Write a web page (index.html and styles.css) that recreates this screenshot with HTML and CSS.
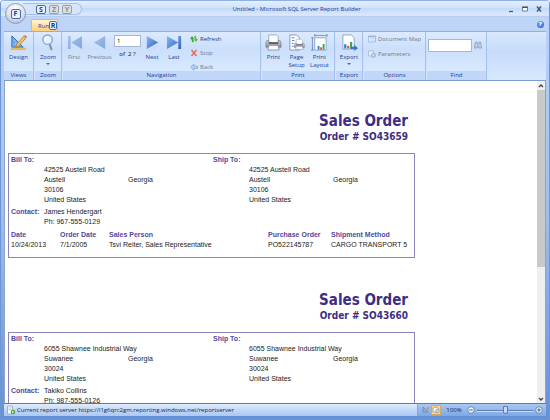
FILE: index.html
```html
<!DOCTYPE html>
<html lang="en">
<head>
<meta charset="utf-8">
<title>Untitled - Microsoft SQL Server Report Builder</title>
<link rel="stylesheet" href="styles.css">
</head>
<body>
<svg class="defs" aria-hidden="true">
  <defs>
    <linearGradient id="blue" x1="0" y1="0" x2="1" y2="1"><stop offset="0" stop-color="#8db8ef"/><stop offset="1" stop-color="#2e63bd"/></linearGradient>
    <linearGradient id="pale" x1="0" y1="0" x2="1" y2="1"><stop offset="0" stop-color="#a9c4ec"/><stop offset="1" stop-color="#7fa4dc"/></linearGradient>
    <linearGradient id="metal" x1="0" y1="0" x2="0" y2="1"><stop offset="0" stop-color="#d4d8df"/><stop offset="1" stop-color="#858b96"/></linearGradient>
    <symbol id="printer" viewBox="0 0 18 18">
      <path d="M4 1h8l2 2v6H4z" fill="#fff" stroke="#8e98a8" stroke-width=".8"/>
      <path d="M2 7h2v2h10V7h2l1 2v5H1V9z" fill="url(#metal)" stroke="#707782" stroke-width=".7"/>
      <path d="M4 9h10v1.500H4z" fill="#4d545f"/>
      <path d="M4 12h10l1 5H3z" fill="#f5f8fc" stroke="#7e8795" stroke-width=".8"/>
    </symbol>
    <symbol id="chart" viewBox="0 0 18 18">
      <path d="M3 10h3v6H3z" fill="#2f7fd8"/><path d="M7 12h3v4H7z" fill="#e6503a"/><path d="M11 7h3v9h-3z" fill="#35a84a"/>
    </symbol>
  </defs>
</svg>
<div class="window">
  <header class="titlebar">
    <div class="quick">
      <button class="tip">S</button><button class="tip dim">Z</button><button class="tip dim">Y</button>
    </div>
    <h1 class="caption">Untitled - Microsoft SQL Server Report Builder</h1>
    <div class="controls">
      <button aria-label="Minimize"><svg viewBox="0 0 8 8"><path d="M2 6.500h4" stroke="#43536e" stroke-width="1.200"/></svg></button>
      <button aria-label="Maximize"><svg viewBox="0 0 8 8"><path d="M1.500 2h5v4h-5z" fill="#fff" stroke="#43536e" stroke-width=".7"/><path d="M1.200 2.300h5.600" stroke="#43536e" stroke-width="1.400"/></svg></button>
      <button aria-label="Close"><svg viewBox="0 0 8 8"><path d="M2 1.500l4 5M6 1.500l-4 5" stroke="#43536e" stroke-width="1.400"/></svg></button>
    </div>
    <button class="orb" aria-label="File"><span class="tip">F</span></button>
  </header>

  <nav class="tabs">
    <button class="tab">Run<span class="tip">R</span></button>
    <button class="help" aria-label="Help">?</button>
  </nav>

  <div class="ribbon">
    <section class="group views">
      <div class="tools">
        <button class="tool"><svg class="big" viewBox="0 0 18 18"><path d="M2 2v12h12z" fill="#7fb0ec" stroke="#2e63bd"/><path d="M5 8.500v3h3z" fill="#e9f3ff" stroke="#4c7dca" stroke-width=".6"/><path d="M1 14.500h16v2.500H1z" fill="#e9b95a"/><path d="M15 2l2 2-8 9-3 1 1-3z" fill="#f6c552" stroke="#a87628" stroke-width=".8"/><path d="M15 2l1-1 2 2-1 1z" fill="#d86848"/></svg>Design</button>
      </div>
      <h2>Views</h2>
    </section>
    <section class="group zoom">
      <div class="tools">
        <button class="tool"><svg class="big" viewBox="0 0 18 18"><path d="M10 10l2 6" stroke="#8b98ab" stroke-width="2.500" stroke-linecap="round"/><circle cx="8" cy="6" r="5" fill="#e4f2ff" stroke="#8fa8cb" stroke-width="1.500"/><path d="M5.500 6a2.500 2.500 0 0 1 2.500-2.500" stroke="#fff" stroke-width="1.200" fill="none"/></svg>Zoom<i class="arrow"></i></button>
      </div>
      <h2>Zoom</h2>
    </section>
    <section class="group navigation">
      <div class="tools">
        <button class="tool off"><svg class="big" viewBox="0 0 18 18"><path d="M2 2h3v14H2zM17 2v14L5.500 9z" fill="url(#pale)"/></svg>First</button>
        <button class="tool off wide"><svg class="big" viewBox="0 0 18 18"><path d="M15 2v14L3 9z" fill="url(#pale)"/></svg>Previous</button>
        <div class="page"><input type="text" value="1" aria-label="Page"><span>of &nbsp;2 ?</span></div>
        <button class="tool"><svg class="big" viewBox="0 0 18 18"><path d="M3 2v14l12-7z" fill="url(#blue)"/></svg>Next</button>
        <button class="tool"><svg class="big" viewBox="0 0 18 18"><path d="M1 2v14l12-7zM13 2h3v14h-3z" fill="url(#blue)"/></svg>Last</button>
        <div class="stack">
          <button><svg viewBox="0 0 8 8"><path d="M0 4l2-3 2.300 3H3l1 2.500-1.500 1L1.200 4z" fill="#3fa535"/><path d="M8 4L6 7 3.700 4H5L4 1.500l1.500-1L6.800 4z" fill="#5cbd38"/></svg>Refresh</button>
          <button class="off"><svg viewBox="0 0 8 8"><path d="M1.500 1l5 6M6.500 1l-5 6" stroke="#ea6a5c" stroke-width="1.500"/></svg>Stop</button>
          <button class="off"><svg viewBox="0 0 8 8"><path d="M4 1v2h3.500v2.500H4v2L.5 4.200z" fill="#b2cdf1" stroke="#7e9fd0" stroke-width=".6"/></svg>Back</button>
        </div>
      </div>
      <h2>Navigation</h2>
    </section>
    <section class="group print">
      <div class="tools">
        <button class="tool"><svg class="big"><use href="#printer"/></svg>Print</button>
        <button class="tool"><svg class="big" viewBox="0 0 18 18"><path d="M2 1h7l3 3v13H2z" fill="#fff" stroke="#7f97bb"/><path d="M4 4h3M4 7h3M4 10h2M4 13h2" stroke="#5a83c1"/><use href="#printer" x="6" y="5" width="12" height="12"/></svg>Page<br>Setup</button>
        <button class="tool"><svg class="big" viewBox="0 0 18 18"><path d="M4 4h12v13H4z" fill="#fff" stroke="#8da5ca"/><path d="M4 1.500h13M1.500 4v13M4 0v3M17 0v3M0 4h3M0 17h3" stroke="#587db4" stroke-width=".8"/><use href="#chart" x="5" y="6" width="12" height="12"/></svg>Print<br>Layout</button>
      </div>
      <h2>Print</h2>
    </section>
    <section class="group export">
      <div class="tools">
        <button class="tool"><svg class="big" viewBox="0 0 18 18"><path d="M2 1h9l3 3v12H2z" fill="#fff" stroke="#8da5ca"/><use href="#chart" x="1" y="3" width="14" height="14"/><path d="M10 13.500h4v-2l4 3.500-4 3v-2h-4z" fill="#3c72ca"/></svg>Export<i class="arrow"></i></button>
      </div>
      <h2>Export</h2>
    </section>
    <section class="group options">
      <div class="tools">
        <div class="stack two">
          <button class="off"><svg viewBox="0 0 8 8"><path d="M.5 1h7v6h-7z" fill="#eef5ff" stroke="#8eaad2" stroke-width=".7"/><path d="M.5 1.700h7" stroke="#8eaad2"/><path d="M3 2v5M4 3.500h3M4 5.200h3" stroke="#9db7dc" stroke-width=".6"/></svg>Document Map</button>
          <button class="off"><svg viewBox="0 0 8 8"><path d="M.5 1h5v5h-5z" fill="#e7effb" stroke="#9bb1d2" stroke-width=".7"/><circle cx="5.500" cy="5.300" r="2" fill="#cbd9ee" stroke="#869fc5" stroke-width=".8"/></svg>Parameters</button>
        </div>
      </div>
      <h2>Options</h2>
    </section>
    <section class="group find">
      <div class="tools">
        <input type="text" aria-label="Find text">
        <button aria-label="Find"><svg viewBox="0 0 8 8"><path d="M1.500 1h1.500v2h2V1h1.500L7.700 7H4.800V5H3.200v2H.3z" fill="#c2d0e6" stroke="#8397b6" stroke-width=".7"/></svg></button>
      </div>
      <h2>Find</h2>
    </section>
  </div>

  <div class="viewer">
    <main class="report">
      <article class="order">
        <h2>Sales Order</h2>
        <h3>Order # SO43659</h3>
        <div class="box">
          <div class="parties">
            <b class="label">Bill To:</b><b class="label ship">Ship To:</b>
            <address><span class="full">42525 Austell Road</span><span>Austell</span><span>Georgia</span><span class="full">30106</span><span class="full">United States</span></address>
            <address class="to"><span class="full">42525 Austell Road</span><span>Austell</span><span>Georgia</span><span class="full">30106</span><span class="full">United States</span></address>
          </div>
          <div class="contact"><b class="label">Contact:</b><span>James Hendergart<br>Ph: 967-555-0129</span></div>
          <table>
            <colgroup><col class="c1"><col class="c2"><col class="c3"><col class="c4"><col></colgroup>
            <thead><tr><th>Date</th><th>Order Date</th><th>Sales Person</th><th>Purchase Order</th><th>Shipment Method</th></tr></thead>
            <tbody><tr><td>10/24/2013</td><td>7/1/2005</td><td>Tsvi Reiter, Sales Representative</td><td>PO522145787</td><td>CARGO TRANSPORT 5</td></tr></tbody>
          </table>
        </div>
      </article>
      <article class="order">
        <h2>Sales Order</h2>
        <h3>Order # SO43660</h3>
        <div class="box">
          <div class="parties">
            <b class="label">Bill To:</b><b class="label ship">Ship To:</b>
            <address><span class="full">6055 Shawnee Industrial Way</span><span>Suwanee</span><span>Georgia</span><span class="full">30024</span><span class="full">United States</span></address>
            <address class="to"><span class="full">6055 Shawnee Industrial Way</span><span>Suwanee</span><span>Georgia</span><span class="full">30024</span><span class="full">United States</span></address>
          </div>
          <div class="contact"><b class="label">Contact:</b><span>Takiko Collins<br>Ph: 987-555-0126</span></div>
        </div>
      </article>
    </main>
    <div class="scroll">
      <button aria-label="Scroll up"><svg viewBox="0 0 8 8"><path d="M2 5l2-2 2 2" fill="none" stroke="#444" stroke-width="1.300"/></svg></button>
      <div class="thumb"></div>
      <button aria-label="Scroll down"><svg viewBox="0 0 8 8"><path d="M2 3l2 2 2-2" fill="none" stroke="#444" stroke-width="1.300"/></svg></button>
    </div>
  </div>

  <footer class="status">
    <svg class="server" viewBox="0 0 10 10"><path d="M1.500 1h5v8h-5z" fill="#f5f8fc" stroke="#8c99ad" stroke-width=".7"/><path d="M2.500 3h3M2.500 4.500h3" stroke="#9aa8bc" stroke-width=".6"/><circle cx="7" cy="7" r="2.300" fill="#42a83c"/><path d="M6.200 5.800L8.200 7l-2 1.200z" fill="#fff"/></svg>
    <span class="message">Current report server https://l1g6qrc2gm.reporting.windows.net/reportserver</span>
    <div class="zoomer">
      <button class="mode" aria-label="Design view"><svg viewBox="0 0 8 8"><path d="M1 1v5h5z" fill="#8cb4e8" stroke="#4b75b4" stroke-width=".6"/><path d="M7 1L3.500 6" stroke="#d88d30" stroke-width="1.300"/></svg></button>
      <button class="mode on" aria-label="Run view"><svg viewBox="0 0 8 8"><path d="M1 2l3-1 2 1v4H1z" fill="#f4f8fe" stroke="#7890b8" stroke-width=".7"/><circle cx="5.500" cy="5" r="1.700" fill="#c6daf2" stroke="#7890b8" stroke-width=".6"/></svg></button>
      <span class="percent">100%</span>
      <button class="round" aria-label="Zoom out"><svg viewBox="0 0 8 8"><circle cx="4" cy="4" r="3.300" fill="#edf3fc" stroke="#56739f" stroke-width=".8"/><path d="M2.300 4h3.400" stroke="#445b80"/></svg></button>
      <input type="range" min="0" max="100" value="50" aria-label="Zoom level">
      <button class="round" aria-label="Zoom in"><svg viewBox="0 0 8 8"><circle cx="4" cy="4" r="3.300" fill="#edf3fc" stroke="#56739f" stroke-width=".8"/><path d="M2.300 4h3.400M4 2.300v3.400" stroke="#445b80"/></svg></button>
    </div>
  </footer>
</div>
</body>
</html>
```

FILE: styles.css
```css
* { box-sizing: border-box; margin: 0; padding: 0; }
body { font: 6px/8px "Open Sans", "Noto Sans", sans-serif; color: #1d3c94; overflow: hidden; }
button { font: inherit; color: inherit; background: none; border: 0; }
button svg { display: block; width: 8px; height: 8px; flex: none; }
.defs { position: absolute; width: 0; height: 0; }

.window { display: flex; flex-direction: column; height: 100vh; padding: 0 3px 3px; background: linear-gradient(#bcd4f8, #9fc0f0 50%, #6490d8); border: solid #6f94d4; border-width: 0 1px 1px; border-radius: 4px 4px 0 0; }

.titlebar { position: relative; flex: none; display: flex; align-items: center; height: 17px; margin: 0 -3px; padding: 1px 3px 0; background: linear-gradient(#8fb0e6 0 1px, #e6f0ff 1px, #d0e2fc 45%, #c4daf9 50%, #dce9fd 90%, #a8c4ee); border-radius: 4px 4px 0 0; }
.quick { display: flex; gap: 3px; align-items: center; width: 59px; height: 12px; margin-left: 19px; padding-left: 13px; border: 1px solid #a2bfe9; border-left: 0; border-radius: 0 7px 7px 0; background: #d6e5fb; }
.tip { display: block; width: 9px; height: 9px; font-weight: bold; font-size: 7px; line-height: 7px; text-align: center; color: #223c84; background: #eaf1fc; border: 1px solid #4468b4; border-radius: 2px; }
.tip.dim { color: #8b8d93; background: #dedede; border-color: #999da5; }
.quick .tip { width: 10px; }
.caption { flex: 1; padding-left: 4px; text-align: center; font-size: 6px; font-weight: normal; }
.controls { display: flex; gap: 6px; padding-right: 3px; }
.orb { position: absolute; left: 4px; top: 3px; z-index: 2; display: flex; align-items: center; justify-content: center; width: 21px; height: 21px; border: 1px solid #8b9bb7; border-radius: 50%; background: radial-gradient(circle at 50% 25%, #fff, #d7dde8 60%, #a1aec5); }
.orb .tip { width: 10px; height: 10px; line-height: 8px; }

.tabs { flex: none; display: flex; align-items: flex-end; justify-content: space-between; height: 14px; padding-left: 28px; background: #bfd5f7; margin: 0 -1px; }
.tab { display: flex; align-items: center; width: 27px; height: 12px; padding-left: 6px; background: linear-gradient(#fff4d4, #fbcf7c); border: 1px solid #e1b76e; border-bottom: 0; border-radius: 2px 2px 0 0; }
.help { align-self: center; width: 7px; height: 7px; margin-right: 3px; font-weight: bold; line-height: 7px; color: #fff; background: radial-gradient(circle at 40% 30%, #80b0f8, #1d55bd); border-radius: 50%; }

.ribbon { flex: none; display: flex; gap: 1px; height: 50px; background: linear-gradient(#d8e8fe, #c7dcfa 40%, #d6e8fd); border-top: 1px solid #8eb0e5; border-bottom: 1px solid #7e9cce; }
.group { display: flex; flex-direction: column; border-right: 1px solid #a3c1ec; background: linear-gradient(#dceafe, #cbdffb 35%, #d8e9ff 80%); }
.group h2 { height: 9px; font-size: 6px; font-weight: normal; line-height: 9px; text-align: center; background: #c0d7f8; }
.tools { flex: 1; display: flex; padding-top: 2px; justify-content: center; }
.tool { display: flex; flex-direction: column; align-items: center; width: 23px; line-height: 8px; }
.tool .big { width: 17px; height: 17px; margin-bottom: 2px; }
.off { color: #737b8b; }
.arrow { margin-top: 2px; border: solid transparent; border-width: 2px 2px 0; border-top-color: #4869a8; }
.views { width: 30px; }
.zoom { width: 27px; }
.navigation { width: 198px; }
.navigation .tools { justify-content: flex-start; }
.navigation .tool { width: 22px; }
.navigation .tool.wide { width: 29px; }
.page { display: flex; flex-direction: column; gap: 3px; width: 27px; color: #111; text-align: center; }
input[type="text"] { font: 6px/8px "Open Sans", "Noto Sans", sans-serif; height: 12px; padding: 0 2px; color: #111; background: #fff; border: 1px solid #a4b7d4; }
.page input { width: 27px; margin-top: 1px; }
.stack { display: flex; flex-direction: column; gap: 6px; padding: 1px 0 0 5px; }
.stack button { display: flex; align-items: center; gap: 2px; height: 8px; white-space: nowrap; }
.two { gap: 7px; padding-left: 0; }
.two button { gap: 2px; }
.print { width: 73px; }
.print .tools { justify-content: flex-start; }
.export { width: 27px; }
.options { width: 62px; }
.find { width: 60px; }
.find .tools { align-items: flex-start; justify-content: flex-start; gap: 2px; padding: 7px 0 0 1px; }
.find input { width: 44px; height: 13px; }
.find button { padding-top: 2px; }

.viewer { flex: 1; min-height: 0; display: flex; justify-content: space-between; background: #fff; border-right: 1px solid #86a4d6; border-left: 1px solid #8ba6cf; }
.report { flex: 1; min-width: 0; overflow: hidden; padding: 0 3px; font: 7px/10px "Liberation Sans", Arial, sans-serif; color: #222; }
.order { width: 407px; padding-top: 33px; }
.order:first-child { padding-top: 31px; }
.order h2, .order h3 { padding-right: 7px; text-align: right; font-family: "DejaVu Sans Condensed", "Noto Sans", sans-serif; color: #3d2e83; }
.order h2 { font-size: 15px; line-height: 18px; }
.order h3 { margin-bottom: 9px; font-size: 10px; line-height: 14px; }
.box { min-height: 105px; padding: 1px 2px; border: 1px solid #8a83bc; }
.label, th { color: #5048a0; font-weight: bold; }
.parties { display: grid; grid-template-columns: 202px 1fr; }
address { display: grid; grid-template-columns: 84px 1fr; padding-left: 33px; font-style: normal; }
address.to { padding-left: 36px; }
.full { grid-column: 1 / -1; }
.contact { display: grid; grid-template-columns: 33px 1fr; margin: 2px 0 3px; }
table { width: 100%; table-layout: fixed; border-collapse: collapse; }
th { text-align: left; }
th, td { white-space: nowrap; }
.c1, .c2 { width: 49px; }
.c3 { width: 159px; }
.c4 { width: 63px; }

.scroll { display: flex; flex-direction: column; width: 8px; background: #efefef; }
.scroll button { height: 9px; }
.thumb { height: 55%; background: #c9c9c9; }
.scroll button:last-child { margin-top: auto; }

.status { flex: none; display: flex; align-items: center; height: 13px; padding-left: 2px; color: #14233f; background: linear-gradient(#dfecfd, #c2d8f7 50%, #aac9f3); border-top: 1px solid #587bb5; }
.server { width: 10px; height: 10px; }
.message { flex: 1; padding-left: 1px; white-space: nowrap; }
.zoomer { display: flex; align-items: center; align-self: stretch; width: 129px; padding: 0 3px; background: linear-gradient(#a9c8f3, #7ea8e4); border-left: 1px solid #87a8d9; }
.mode { padding: 1px; width: 10px; height: 10px; }
.mode.on { background: #fbd587; outline: 1px solid #dfa957; outline-offset: -1px; }
.percent { width: 26px; text-align: center; }
.round { width: 8px; flex: none; }
input[type="range"] { flex: 1; min-width: 0; height: 9px; margin: 0 2px; appearance: none; background: linear-gradient(#0000 4px, #5c7fb5 4px 5px, #c9dcf6 5px 6px, #0000 6px); }
input[type="range"]::-webkit-slider-thumb { appearance: none; width: 5px; height: 8px; background: #c9dbf4; border: 1px solid #587aaf; border-radius: 1px 1px 3px 3px; }
```
